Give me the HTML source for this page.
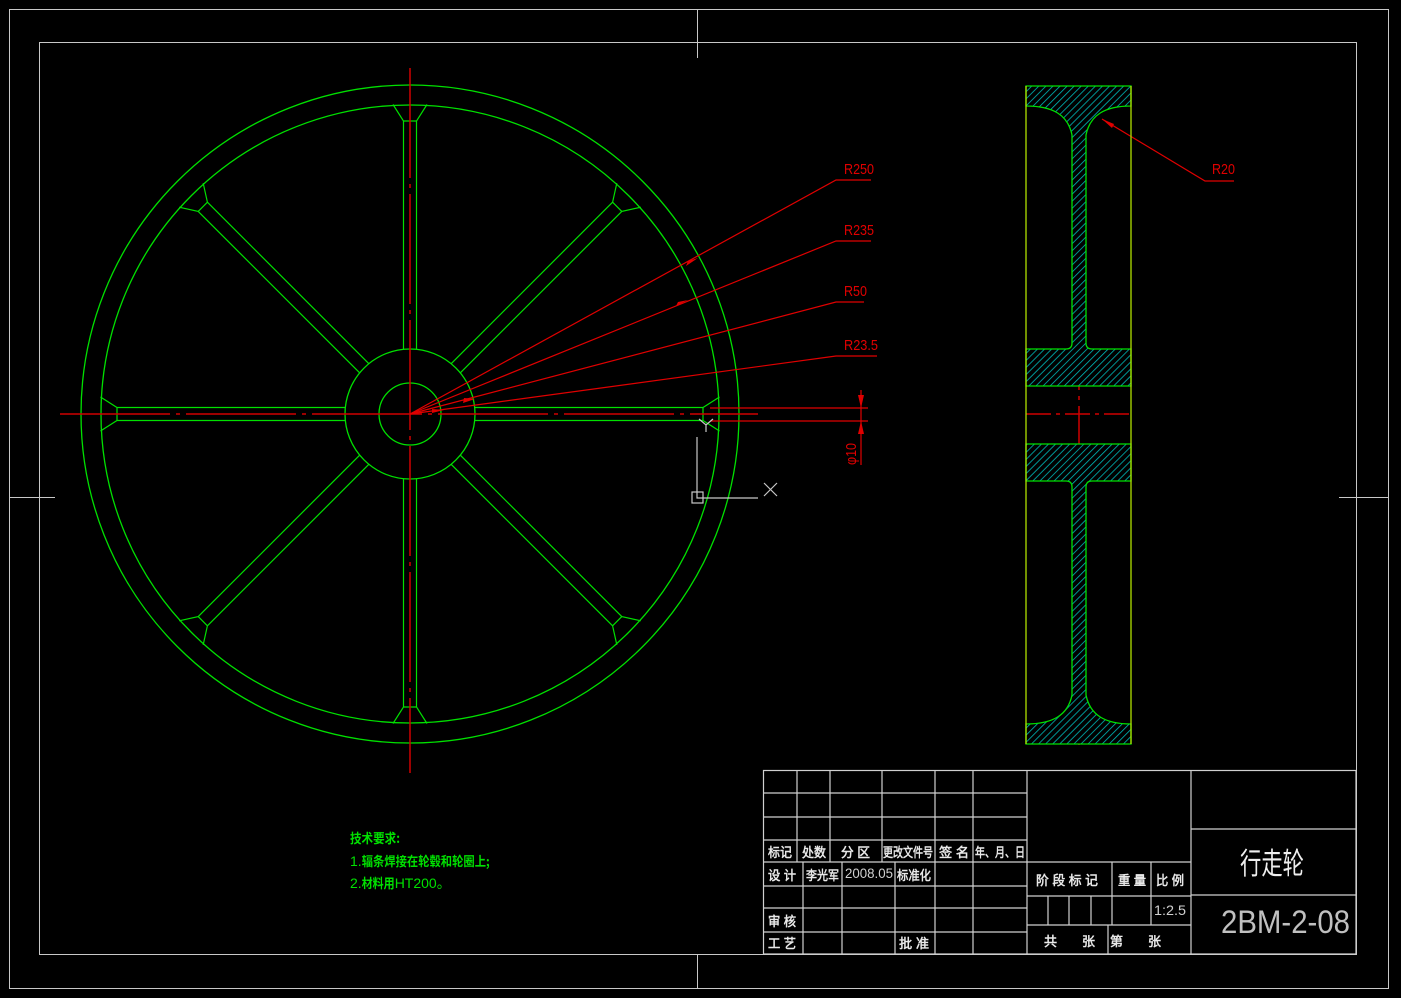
<!DOCTYPE html>
<html><head><meta charset="utf-8"><style>
html,body{margin:0;padding:0;background:#000;}
svg{display:block}
text{font-family:"Liberation Sans Narrow","Liberation Sans","WenQuanYi Zen Hei",sans-serif;}
.cj{font-family:"WenQuanYi Zen Hei","Noto Sans CJK SC",sans-serif;font-weight:bold;}
</style></head><body>
<svg width="1401" height="998" viewBox="0 0 1401 998" xmlns="http://www.w3.org/2000/svg">
<defs>
<pattern id="h" patternUnits="userSpaceOnUse" width="5" height="5" patternTransform="rotate(45)">
<rect width="5" height="5" fill="#000"/>
<line x1="0" y1="0" x2="0" y2="5" stroke="#00b8b8" stroke-width="1.6"/>
</pattern>
<g id="sp" fill="none" stroke="#00e000" stroke-width="1.2">
<path d="M-6.5,-64.7 L-6.5,-293 L-17,-309.5 M6.5,-64.7 L6.5,-293 L17,-309.5 M-6.5,-293 L6.5,-293"/>
</g>
</defs>
<rect width="1401" height="998" fill="#000"/>
<g fill="none" stroke="#c8c8c8" stroke-width="1">
<rect x="9.5" y="9.5" width="1379" height="979"/>
<rect x="39.5" y="42.5" width="1317" height="912"/>
<path d="M697.5,9 V58 M697.5,954 V988 M9,497.5 H55 M1339,497.5 H1388"/>
</g>
<g fill="none" stroke="#00e000" stroke-width="1.3">
<circle cx="410" cy="414" r="329"/>
<circle cx="410" cy="414" r="309"/>
<circle cx="410" cy="414" r="65"/>
<circle cx="410" cy="414" r="31"/>
</g>
<g transform="translate(410,414)">
<use href="#sp"/><use href="#sp" transform="rotate(45)"/><use href="#sp" transform="rotate(90)"/><use href="#sp" transform="rotate(135)"/>
<use href="#sp" transform="rotate(180)"/><use href="#sp" transform="rotate(225)"/><use href="#sp" transform="rotate(270)"/><use href="#sp" transform="rotate(315)"/>
</g>
<g stroke="#d00000" stroke-width="1.5" fill="none">
<path d="M410,68 V773" stroke-dasharray="110,6,4,6"/>
<path d="M60,414 H758" stroke-dasharray="110,6,4,6"/>
<path d="M1079,350 V745" stroke-dasharray="40,6,4,6"/>
<path d="M1026,414 H1131" stroke-dasharray="25,5,4,5"/>
</g>
<g stroke="#e00000" stroke-width="1.2" fill="none">
<path d="M410,414 L836,180 H871"/>
<path d="M410,414 L836,241 H871"/>
<path d="M410,414 L836,302 H864"/>
<path d="M410,414 L836,356 H877"/>
<path d="M1102,119 L1205,181 H1234"/>
<path d="M710,408 H868 M710,421 H868 M861,390 V465"/>
</g>
<g fill="#e00000">
<polygon points="698,258 686,266 688,261"/>
<polygon points="688,300 676,306 678,302"/>
<polygon points="475,399 463,403 464,398"/>
<polygon points="444,410 432,413 432,409"/>
<polygon points="1102,119 1114,124 1112,128"/>
<polygon points="861,408 858,395 864,395"/>
<polygon points="861,421 858,434 864,434"/>
</g>
<g fill="#e00000" font-size="15">
<text x="844" y="174" textLength="30" lengthAdjust="spacingAndGlyphs">R250</text>
<text x="844" y="235" textLength="30" lengthAdjust="spacingAndGlyphs">R235</text>
<text x="844" y="296" textLength="23" lengthAdjust="spacingAndGlyphs">R50</text>
<text x="844" y="350" textLength="34" lengthAdjust="spacingAndGlyphs">R23.5</text>
<text x="1212" y="174" textLength="23" lengthAdjust="spacingAndGlyphs">R20</text>
<text transform="translate(856,465) rotate(-90)" textLength="22" lengthAdjust="spacingAndGlyphs">φ10</text>
</g>
<g stroke="#c8c8c8" stroke-width="1.2" fill="none">
<path d="M697,437 V498 H758"/>
<rect x="692" y="492" width="11" height="11"/>
<path d="M764,483 L777,496 M777,483 L764,496"/>
<path d="M699,419 L706,425 L713,419 M706,425 V432"/>
</g>
<g stroke="#00e000" stroke-width="1.3">
<path fill="url(#h)" d="M1026,86 H1131 V106 C1105,106 1090,115 1086,135 V343 Q1086,349 1092,349 H1131 V386 H1026 V349 H1066 Q1072,349 1072,343 V135 C1068,115 1053,106 1026,106 Z"/>
<path fill="url(#h)" d="M1026,744 H1131 V724 C1105,724 1090,715 1086,695 V487 Q1086,481 1092,481 H1131 V444 H1026 V481 H1066 Q1072,481 1072,487 V695 C1068,715 1053,724 1026,724 Z"/>
<path fill="none" stroke="#b0e000" d="M1026,86 V744 M1131,86 V744"/>
</g>
<g fill="#00e000" font-size="14">
<text x="350" y="843" class="cj" font-size="13" textLength="50" lengthAdjust="spacingAndGlyphs">技术要求:</text>
<text x="350" y="866"><tspan>1.</tspan><tspan class="cj" font-size="13" textLength="128" lengthAdjust="spacingAndGlyphs">辐条焊接在轮毂和轮圈上;</tspan></text>
<text x="350" y="888"><tspan>2.</tspan><tspan class="cj" font-size="13" textLength="33" lengthAdjust="spacingAndGlyphs">材料用</tspan><tspan>HT200。</tspan></text>
</g>
<g stroke="#d0d0d0" stroke-width="1.2" fill="none">
<rect x="763.5" y="770.5" width="592.5" height="183.5"/>
<path d="M763,793 H1027 M763,817 H1027 M763,840 H1027 M763,862 H1027 M763,886 H1027 M763,908 H1027 M763,932 H1027"/>
<path d="M797,770 V862 M830,770 V862 M882,770 V862 M935,770 V954 M973,770 V954 M1027,770 V954"/>
<path d="M803,862 V954 M842,862 V954 M895,862 V954"/>
<path d="M1027,862 H1191 M1027,896 H1191 M1027,925 H1191 M1112,862 V925 M1151,862 V925 M1048,896 V925 M1069,896 V925 M1091,896 V925 M1108,925 V954"/>
<path d="M1191,770 V954 M1191,829 H1356 M1191,895 H1356"/>
</g>
<g fill="#e8e8e8" font-size="13" class="cj" lengthAdjust="spacingAndGlyphs">
<text x="768" y="857" textLength="24" lengthAdjust="spacingAndGlyphs">标记</text>
<text x="802" y="857" textLength="24" lengthAdjust="spacingAndGlyphs">处数</text>
<text x="841" y="857" textLength="29" lengthAdjust="spacingAndGlyphs">分 区</text>
<text x="883" y="857" textLength="50" lengthAdjust="spacingAndGlyphs">更改文件号</text>
<text x="939" y="857" textLength="30" lengthAdjust="spacingAndGlyphs">签 名</text>
<text x="975" y="857" textLength="50" lengthAdjust="spacingAndGlyphs">年、月、日</text>
<text x="768" y="880" textLength="28" lengthAdjust="spacingAndGlyphs">设 计</text>
<text x="806" y="880" textLength="33" lengthAdjust="spacingAndGlyphs">李光军</text>
<text x="897" y="880" textLength="34" lengthAdjust="spacingAndGlyphs">标准化</text>
<text x="768" y="926" textLength="28" lengthAdjust="spacingAndGlyphs">审 核</text>
<text x="768" y="948" textLength="28" lengthAdjust="spacingAndGlyphs">工 艺</text>
<text x="899" y="948" textLength="30" lengthAdjust="spacingAndGlyphs">批 准</text>
<text x="1036" y="885" textLength="62" lengthAdjust="spacingAndGlyphs">阶 段 标 记</text>
<text x="1118" y="885" textLength="28" lengthAdjust="spacingAndGlyphs">重 量</text>
<text x="1156" y="885" textLength="28" lengthAdjust="spacingAndGlyphs">比 例</text>
<text x="1044" y="946">共</text><text x="1082" y="946">张</text><text x="1110" y="946">第</text><text x="1148" y="946">张</text>
</g>
<g fill="#d0d0d0">
<text x="845" y="878" font-size="14" textLength="48" lengthAdjust="spacingAndGlyphs">2008.05</text>
<text x="1154" y="915" font-size="14" textLength="32" lengthAdjust="spacingAndGlyphs">1:2.5</text>
<text x="1221" y="933" font-size="32" textLength="129" lengthAdjust="spacingAndGlyphs" fill="#c0c0c0" style="font-weight:normal">2BM-2-08</text>
<text x="1240" y="874" font-size="30" fill="#eee" style="font-family:'WenQuanYi Zen Hei',sans-serif" textLength="64" lengthAdjust="spacingAndGlyphs">行走轮</text>
</g>
</svg>
</body></html>
